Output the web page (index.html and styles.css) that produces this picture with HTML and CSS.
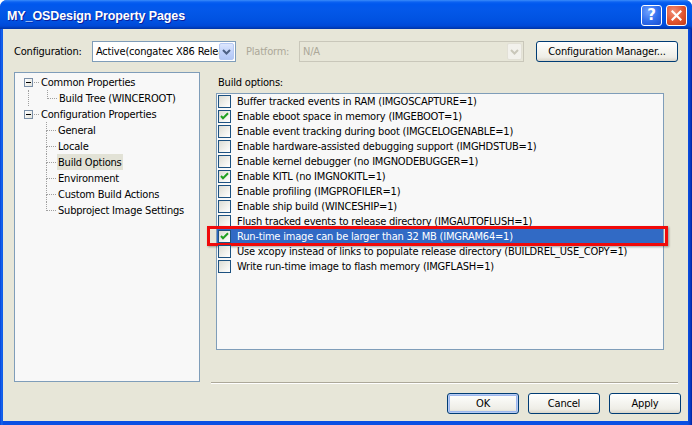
FILE: index.html
```html
<!DOCTYPE html>
<html>
<head>
<meta charset="utf-8">
<title>MY_OSDesign Property Pages</title>
<link rel="stylesheet" href="styles.css">
</head>
<body>
<div class="window">
  <div class="titlebar">
    <span class="title">MY_OSDesign Property Pages</span>
    <div class="tb-buttons">
      <span class="tb-btn help">?</span>
      <span class="tb-btn close"><svg width="11" height="11" viewBox="0 0 11 11"><path d="M1.5 1.5 L9.5 9.5 M9.5 1.5 L1.5 9.5" stroke="#fff" stroke-width="2.2" stroke-linecap="square"/></svg></span>
    </div>
  </div>
  <div class="client">
    <div class="config-row">
      <span class="lbl cfg-lbl">Configuration:</span>
      <div class="combo cfg-combo">
        <span class="combo-text">Active(congatec X86 Release)</span>
        <span class="drop"><svg width="9" height="6" viewBox="0 0 9 6"><path d="M1 1 L4.5 4.5 L8 1" fill="none" stroke="#4D6185" stroke-width="2"/></svg></span>
      </div>
      <span class="lbl disabled plat-lbl">Platform:</span>
      <div class="combo plat-combo disabled">
        <span class="combo-text">N/A</span>
        <span class="drop"><svg width="9" height="6" viewBox="0 0 9 6"><path d="M1 1 L4.5 4.5 L8 1" fill="none" stroke="#C9C7BA" stroke-width="2"/></svg></span>
      </div>
      <button class="btn cfgmgr">Configuration Manager...</button>
    </div>

    <div class="main">
      <div class="tree">
        <div class="trow top first">
          <span class="exp"><span class="minus"></span></span><span class="hl"></span><span class="tt">Common Properties</span>
        </div>
        <div class="trow child">
          <span class="g0"></span><span class="g1 stem"></span><span class="conn last"><span class="t"></span><span class="b"></span></span><span class="tt">Build Tree (WINCEROOT)</span>
        </div>
        <div class="trow top lastroot">
          <span class="exp"><span class="minus"></span></span><span class="hl"></span><span class="tt">Configuration Properties</span>
        </div>
        <div class="trow child">
          <span class="g0"></span><span class="g1"></span><span class="conn"><span class="t"></span><span class="b"></span></span><span class="tt">General</span>
        </div>
        <div class="trow child">
          <span class="g0"></span><span class="g1"></span><span class="conn"><span class="t"></span><span class="b"></span></span><span class="tt">Locale</span>
        </div>
        <div class="trow child">
          <span class="g0"></span><span class="g1"></span><span class="conn"><span class="t"></span><span class="b"></span></span><span class="tt sel">Build Options</span>
        </div>
        <div class="trow child">
          <span class="g0"></span><span class="g1"></span><span class="conn"><span class="t"></span><span class="b"></span></span><span class="tt">Environment</span>
        </div>
        <div class="trow child">
          <span class="g0"></span><span class="g1"></span><span class="conn"><span class="t"></span><span class="b"></span></span><span class="tt">Custom Build Actions</span>
        </div>
        <div class="trow child">
          <span class="g0"></span><span class="g1"></span><span class="conn last"><span class="t"></span><span class="b"></span></span><span class="tt">Subproject Image Settings</span>
        </div>
      </div>

      <div class="right">
        <div class="opts-label">Build options:</div>
        <div class="list">
          <div class="lrow"><span class="cb"></span><span class="lt">Buffer tracked events in RAM (IMGOSCAPTURE=1)</span></div>
          <div class="lrow"><span class="cb"><svg width="11" height="11" viewBox="0 0 11 11"><path d="M2 5 L4 7.2 L9 2.2" fill="none" stroke="#21A121" stroke-width="2"/></svg></span><span class="lt">Enable eboot space in memory (IMGEBOOT=1)</span></div>
          <div class="lrow"><span class="cb"></span><span class="lt">Enable event tracking during boot (IMGCELOGENABLE=1)</span></div>
          <div class="lrow"><span class="cb"></span><span class="lt">Enable hardware-assisted debugging support (IMGHDSTUB=1)</span></div>
          <div class="lrow"><span class="cb"></span><span class="lt">Enable kernel debugger (no IMGNODEBUGGER=1)</span></div>
          <div class="lrow"><span class="cb"><svg width="11" height="11" viewBox="0 0 11 11"><path d="M2 5 L4 7.2 L9 2.2" fill="none" stroke="#21A121" stroke-width="2"/></svg></span><span class="lt">Enable KITL (no IMGNOKITL=1)</span></div>
          <div class="lrow"><span class="cb"></span><span class="lt">Enable profiling (IMGPROFILER=1)</span></div>
          <div class="lrow"><span class="cb"></span><span class="lt">Enable ship build (WINCESHIP=1)</span></div>
          <div class="lrow"><span class="cb"></span><span class="lt">Flush tracked events to release directory (IMGAUTOFLUSH=1)</span></div>
          <div class="lrow hi"><span class="cb"><svg width="11" height="11" viewBox="0 0 11 11"><path d="M2 5 L4 7.2 L9 2.2" fill="none" stroke="#21A121" stroke-width="2"/></svg></span><span class="lt">Run-time image can be larger than 32 MB (IMGRAM64=1)</span><span class="redbox"></span></div>
          <div class="lrow"><span class="cb"></span><span class="lt">Use xcopy instead of links to populate release directory (BUILDREL_USE_COPY=1)</span></div>
          <div class="lrow"><span class="cb"></span><span class="lt">Write run-time image to flash memory (IMGFLASH=1)</span></div>
        </div>
        <div class="sep"></div>
      </div>
    </div>

    <div class="actions">
      <button class="btn dlg default">OK</button>
      <button class="btn dlg">Cancel</button>
      <button class="btn dlg">Apply</button>
    </div>
  </div>
</div>
</body>
</html>
```

FILE: styles.css
```css
html, body {
  margin: 0;
  padding: 0;
  background: #ffffff;
}

body {
  font-family: "DejaVu Sans Condensed", "DejaVu Sans", sans-serif;
  font-stretch: condensed;
  font-size: 11px;
  letter-spacing: -0.2px;
  color: #000;
}

.window {
  width: 692px;
  height: 425px;
  box-sizing: border-box;
  display: flex;
  flex-direction: column;
  background: linear-gradient(to right, #0842D8 0, #166BF0 2px, #0A4FE3 3px, #0A4FE3 calc(100% - 4px), #0840C8 calc(100% - 2px), #0022A0 100%);
  border-radius: 7px 7px 0 0;
  overflow: hidden;
}

.titlebar {
  height: 29px;
  flex: none;
  display: flex;
  align-items: center;
  justify-content: space-between;
  padding: 0 5px 0 7px;
  background: linear-gradient(to bottom, #3A8CFA 0, #0C62F2 2px, #0058EE 4px, #0458EA 9px, #0255E4 16px, #0050E0 22px, #0049D7 26px, #003BB6 28px, #0033A8 29px);
}

.title {
  color: #fff;
  font-family: "Liberation Sans", Arial, sans-serif;
  font-stretch: normal;
  font-weight: bold;
  font-size: 12.5px;
  letter-spacing: -0.1px;
  text-shadow: 1px 1px 0 #0A1F9C;
  padding-top: 2px;
}

.tb-buttons {
  display: flex;
  gap: 4px;
  padding-top: 1px;
}

.tb-btn {
  width: 19px;
  height: 19px;
  border: 1px solid #fff;
  border-radius: 3px;
  display: flex;
  align-items: center;
  justify-content: center;
  color: #fff;
  font-family: "DejaVu Sans", sans-serif;
  font-stretch: normal;
  letter-spacing: 0;
  font-weight: bold;
  font-size: 15px;
}

.tb-btn.help {
  background: radial-gradient(circle at 35% 30%, #6FA2FF 0, #2E6CEC 55%, #1B4FD0 100%);
}

.tb-btn.close {
  background: radial-gradient(circle at 35% 30%, #F29079 0, #E1542F 55%, #C03A18 100%);
}

.client {
  flex: 1;
  margin: 0 4px 4px 3px;
  background: #E7E6D8;
  display: flex;
  flex-direction: column;
  padding: 12px 7px 0 11px;
}

.config-row {
  height: 21px;
  display: flex;
  align-items: center;
}

.lbl {
  white-space: nowrap;
}

.cfg-lbl {
  width: 78px;
}

.plat-lbl {
  margin-left: 10px;
  width: 53px;
}

.disabled {
  color: #ACA899;
}

.combo {
  height: 21px;
  box-sizing: border-box;
  border: 1px solid #7F9DB9;
  background: #fff;
  display: flex;
  align-items: center;
  padding: 1px;
}

.cfg-combo {
  width: 144px;
}

.plat-combo {
  width: 225px;
  border-color: #C9C7BA;
  background: #E7E6D8;
}

.combo-text {
  flex: 1;
  overflow: hidden;
  white-space: nowrap;
  padding-left: 2px;
}

.drop {
  width: 15px;
  height: 17px;
  flex: none;
  box-sizing: border-box;
  border: 1px solid #B5C9F4;
  border-radius: 2px;
  background: linear-gradient(to bottom, #DDE7FD 0, #C3D4FB 50%, #B2C7F6 100%);
  display: flex;
  align-items: center;
  justify-content: center;
}

.plat-combo .drop {
  border-color: #E2E0D6;
  background: #F2F1EC;
}

.btn {
  font-family: "DejaVu Sans Condensed", "DejaVu Sans", sans-serif;
  font-stretch: condensed;
  font-size: 11px;
  letter-spacing: -0.2px;
  color: #000;
  height: 21px;
  box-sizing: border-box;
  border: 1px solid #003C74;
  border-radius: 3px;
  background: linear-gradient(to bottom, #FFFFFF 0, #F6F6F2 40%, #EEEDE6 80%, #D9D5CA 100%);
  padding: 0;
  margin: 0;
}

.cfgmgr {
  width: 142px;
  margin-left: 12px;
}

.main {
  margin-top: 10px;
  height: 312px;
  display: flex;
}

.tree {
  width: 186px;
  height: 310px;
  box-sizing: border-box;
  border: 1px solid #7F9DB9;
  background: #F8F8F8;
  padding-top: 1px;
}

.trow {
  height: 16px;
  display: flex;
  align-items: center;
  white-space: nowrap;
}

.trow.top {
  padding-left: 9px;
}

.exp {
  width: 9px;
  height: 9px;
  box-sizing: border-box;
  border: 1px solid #7A8FA8;
  background: linear-gradient(135deg, #FFFFFF 0, #E4E4DC 100%);
  display: flex;
  align-items: center;
  justify-content: center;
}

.minus {
  width: 5px;
  height: 1px;
  background: #000;
}

.hl {
  width: 5px;
  border-top: 1px dotted #A0A0A0;
  margin-left: 1px;
}

.tt {
  margin-left: 1px;
  padding: 1px 1px 0;
  line-height: 15px;
}

.tt.sel {
  background: #E2E2D6;
}

.trow.child {
  align-items: stretch;
}

.g0 {
  width: 13px;
}

.g1 {
  width: 18px;
}

.g1.stem {
  border-left: 1px dotted #A0A0A0;
}

.conn {
  width: 10px;
  display: flex;
  flex-direction: column;
}

.conn .t {
  height: 8px;
  border-left: 1px dotted #A0A0A0;
  border-bottom: 1px dotted #A0A0A0;
}

.conn .b {
  flex: 1;
  border-left: 1px dotted #A0A0A0;
}

.conn.last .b {
  border-left: none;
}

.trow.child .tt {
  display: flex;
  align-items: center;
}

.right {
  width: 448px;
  margin-left: 16px;
  display: flex;
  flex-direction: column;
}

.opts-label {
  height: 21px;
  box-sizing: border-box;
  padding-top: 3px;
  line-height: 15px;
  padding-left: 2px;
}

.list {
  height: 257px;
  box-sizing: border-box;
  border: 1px solid #7F9DB9;
  background: #F8F8F8;
}

.lrow {
  height: 15px;
  display: flex;
  align-items: center;
  white-space: nowrap;
  position: relative;
}

.cb {
  width: 13px;
  height: 13px;
  flex: none;
  box-sizing: border-box;
  margin-left: 1px;
  border: 1px solid #1C5180;
  background: linear-gradient(135deg, #DCDCD4 0, #F2F2EE 60%, #FFFFFF 100%);
  display: flex;
  align-items: center;
  justify-content: center;
}

.lt {
  margin-left: 6px;
}

.lrow.hi {
  background: #316AC5;
  color: #fff;
}

.redbox {
  position: absolute;
  left: -10px;
  right: -5px;
  top: -3px;
  bottom: -2px;
  border: 3px solid #F00A0A;
  box-shadow: 1px 1px 2px rgba(0, 0, 0, 0.35);
}

.sep {
  margin-top: auto;
  margin-left: -5px;
  width: 467px;
  height: 2px;
  box-sizing: border-box;
  border-top: 1px solid #ACA899;
  border-bottom: 1px solid #FFFFFF;
}

.actions {
  margin-top: 9px;
  display: flex;
  justify-content: flex-end;
  gap: 9px;
}

.btn.dlg {
  width: 72px;
}

.btn.default {
  box-shadow: inset 0 0 0 1px #B7CBF3, inset 0 0 0 2px #9DB7EE;
}
```
